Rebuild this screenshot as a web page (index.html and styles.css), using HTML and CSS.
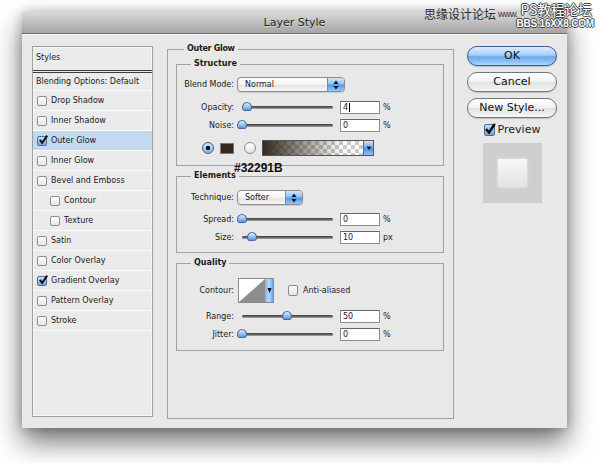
FILE: index.html
```html
<!DOCTYPE html>
<html lang="en">
<head>
<meta charset="utf-8">
<title>Layer Style</title>
<link rel="stylesheet" href="styles.css">
</head>
<body>
<div class="watermark">
  <span class="wm-cn">思缘设计论坛</span>
  <span class="wm-www">www.</span>
  <span class="wm-stack">
    <span class="wm-ps">PS教程论坛</span>
    <span class="wm-bbs">BBS.16XX8.COM</span>
  </span>
</div>

<div class="window">
  <div class="titlebar">Layer Style</div>
  <div class="content">

    <div class="styles-panel">
      <div class="sp-head">Styles</div>
      <div class="sp-row sp-blend">Blending Options: Default</div>
      <div class="sp-row"><span class="cb"></span>Drop Shadow</div>
      <div class="sp-row"><span class="cb"></span>Inner Shadow</div>
      <div class="sp-row sel"><span class="cb on"><svg viewBox="0 0 10 10" width="10" height="10"><path d="M1.8 4.8 L4.2 7.8 L9.2 0.6" fill="none" stroke="#111" stroke-width="2"/></svg></span>Outer Glow</div>
      <div class="sp-row"><span class="cb"></span>Inner Glow</div>
      <div class="sp-row"><span class="cb"></span>Bevel and Emboss</div>
      <div class="sp-row sub"><span class="cb"></span>Contour</div>
      <div class="sp-row sub"><span class="cb"></span>Texture</div>
      <div class="sp-row"><span class="cb"></span>Satin</div>
      <div class="sp-row"><span class="cb"></span>Color Overlay</div>
      <div class="sp-row"><span class="cb on"><svg viewBox="0 0 10 10" width="10" height="10"><path d="M1.8 4.8 L4.2 7.8 L9.2 0.6" fill="none" stroke="#111" stroke-width="2"/></svg></span>Gradient Overlay</div>
      <div class="sp-row"><span class="cb"></span>Pattern Overlay</div>
      <div class="sp-row"><span class="cb"></span>Stroke</div>
    </div>

    <fieldset class="main">
      <legend>Outer Glow</legend>

      <fieldset class="group g-structure">
        <legend>Structure</legend>
        <div class="row r-blend">
          <span class="lbl">Blend Mode:</span>
          <div class="select w-blend"><span class="txt">Normal</span><span class="cap"><svg viewBox="0 0 6 10" width="6" height="10"><path d="M3 0.5 L5.6 4 L0.4 4 Z M3 9.5 L5.6 6 L0.4 6 Z" fill="#0d1733"/></svg></span></div>
        </div>
        <div class="row r-opacity">
          <span class="lbl">Opacity:</span>
          <div class="slider"><div class="track"></div><div class="thumb" style="left:5px"></div></div>
          <div class="input">4<i class="caret"></i></div><span class="unit">%</span>
        </div>
        <div class="row r-noise">
          <span class="lbl">Noise:</span>
          <div class="slider"><div class="track"></div><div class="thumb" style="left:0px"></div></div>
          <div class="input">0</div><span class="unit">%</span>
        </div>
        <div class="row r-color">
          <span class="radio on"></span>
          <span class="swatch"></span>
          <span class="radio"></span>
          <span class="gradient"><span class="grad-fill"></span><span class="grad-cap"><svg viewBox="0 0 6 6" width="6" height="6"><path d="M0.5 1.5 L5.5 1.5 L3 5 Z" fill="#111"/></svg></span></span>
        </div>
      </fieldset>

      <div class="hex">#32291B</div>

      <fieldset class="group g-elements">
        <legend>Elements</legend>
        <div class="row r-tech">
          <span class="lbl">Technique:</span>
          <div class="select w-tech"><span class="txt">Softer</span><span class="cap"><svg viewBox="0 0 6 10" width="6" height="10"><path d="M3 0.5 L5.6 4 L0.4 4 Z M3 9.5 L5.6 6 L0.4 6 Z" fill="#0d1733"/></svg></span></div>
        </div>
        <div class="row r-spread">
          <span class="lbl">Spread:</span>
          <div class="slider"><div class="track"></div><div class="thumb" style="left:0px"></div></div>
          <div class="input">0</div><span class="unit">%</span>
        </div>
        <div class="row r-size">
          <span class="lbl">Size:</span>
          <div class="slider"><div class="track"></div><div class="thumb" style="left:10px"></div></div>
          <div class="input">10</div><span class="unit">px</span>
        </div>
      </fieldset>

      <fieldset class="group g-quality">
        <legend>Quality</legend>
        <div class="row r-contour">
          <span class="lbl">Contour:</span>
          <div class="contour">
            <svg class="contour-curve" viewBox="0 0 26 23" width="26" height="23" preserveAspectRatio="none"><path d="M0 23 L26 0 L26 23 Z" fill="#8e8e8e"/></svg>
            <span class="contour-cap"><svg viewBox="0 0 6 8" width="5" height="7"><path d="M0.5 1 L5.5 1 L3 7 Z" fill="#111"/></svg></span>
          </div>
          <span class="cbox"></span><span class="cbox-lbl">Anti-aliased</span>
        </div>
        <div class="row r-range">
          <span class="lbl">Range:</span>
          <div class="slider"><div class="track"></div><div class="thumb" style="left:45px"></div></div>
          <div class="input">50</div><span class="unit">%</span>
        </div>
        <div class="row r-jitter">
          <span class="lbl">Jitter:</span>
          <div class="slider"><div class="track"></div><div class="thumb" style="left:0px"></div></div>
          <div class="input">0</div><span class="unit">%</span>
        </div>
      </fieldset>
    </fieldset>

    <div class="actions">
      <div class="btn ok">OK</div>
      <div class="btn">Cancel</div>
      <div class="btn">New Style...</div>
      <div class="preview-toggle"><span class="pcb"><svg viewBox="0 0 12 12" width="12" height="12"><path d="M2 6 L5 9.5 L10.8 0.8" fill="none" stroke="#0a0a0a" stroke-width="2.4"/></svg></span><span>Preview</span></div>
      <div class="preview-box"><div class="preview-square"></div></div>
    </div>

  </div>
</div>
</body>
</html>
```

FILE: styles.css
```css
html, body {
  margin: 0;
  padding: 0;
}
body {
  width: 600px;
  height: 463px;
  overflow: hidden;
  background: #ffffff;
  font-family: "DejaVu Sans", "Liberation Sans", sans-serif;
  font-size: 8px;
  color: #1a1a1a;
  position: relative;
}

/* watermark overlay */
.watermark {
  position: absolute;
  left: 424px;
  top: 1px;
  z-index: 5;
  display: flex;
  align-items: flex-start;
  white-space: nowrap;
}
.wm-cn {
  font-family: "Noto Sans CJK SC", sans-serif;
  font-size: 12px;
  line-height: 14px;
  color: #2b2b2b;
  margin-top: 6px;
}
.wm-www {
  font-family: "Liberation Sans", sans-serif;
  font-size: 9px;
  line-height: 9px;
  color: #333;
  margin-top: 9px;
  margin-left: 2px;
  letter-spacing: -0.5px;
}
.wm-stack {
  display: flex;
  flex-direction: column;
  align-items: flex-start;
  margin-left: 3px;
}
.wm-ps {
  font-family: "Noto Sans CJK SC", sans-serif;
  font-size: 14px;
  line-height: 17px;
  color: #ffffff;
  text-shadow: 1px 0 0 #444, -1px 0 0 #444, 0 1px 0 #444, 0 -1px 0 #444;
  letter-spacing: -0.3px;
}
.wm-bbs {
  font-family: "Liberation Sans", sans-serif;
  font-weight: bold;
  font-size: 10px;
  line-height: 11px;
  color: #ffffff;
  text-shadow: 1px 0 0 #444, -1px 0 0 #444, 0 1px 0 #444, 0 -1px 0 #444;
  margin-left: -4px;
  letter-spacing: -0.2px;
}

/* window */
.window {
  margin: 12px 0 0 22px;
  width: 545px;
  background: #e8e8e8;
  box-shadow: 0 14px 26px rgba(0, 0, 0, 0.55), 0 0 10px rgba(0, 0, 0, 0.22);
}
.titlebar {
  height: 22px;
  box-sizing: border-box;
  border-bottom: 1px solid #6a6a6a;
  background: linear-gradient(#dadada, #b9b9b9 60%, #a5a5a5);
  text-align: center;
  font-size: 11px;
  line-height: 21px;
  color: #1e1e1e;
  text-shadow: 0 1px 0 rgba(255, 255, 255, 0.45);
}
.content {
  display: flex;
  align-items: flex-start;
  height: 394px;
  box-sizing: border-box;
  padding: 11px 10px 0 10px;
  border-top: 1px solid #f6f6f6;
}

/* styles list */
.styles-panel {
  width: 121px;
  height: 371px;
  box-sizing: border-box;
  border: 1px solid #9e9e9e;
  background: #ebebeb;
  box-shadow: inset 0 0 0 1px #f7f7f7;
  flex: none;
}
.sp-head {
  height: 23px;
  line-height: 22px;
  padding-left: 3px;
  border-bottom: 3px double #3c3c3c;
}
.sp-row {
  height: 19px;
  display: flex;
  align-items: center;
  gap: 4px;
  padding-left: 4px;
  border-bottom: 1px solid #fbfbfb;
  white-space: nowrap;
}
.sp-blend {
  height: 17px;
  padding-left: 3px;
}
.sp-row.sub {
  padding-left: 17px;
}
.sp-row.sel {
  background: #c4d8ef;
}
.cb {
  width: 10px;
  height: 10px;
  box-sizing: border-box;
  border: 1px solid #8e8e8e;
  border-radius: 2px;
  background: linear-gradient(#ffffff, #e6e6e6);
  flex: none;
  display: flex;
  align-items: center;
  justify-content: center;
  overflow: visible;
}
.cb.on {
  background: linear-gradient(#c9e0f8, #76a9e2);
  border-color: #4d6f98;
}
.cb svg {
  flex: none;
  margin-top: -2px;
  margin-right: -2px;
}

/* main fieldset */
fieldset {
  margin: 0;
  min-inline-size: 0;
}
legend {
  font-weight: bold;
  font-size: 8px;
  line-height: 10px;
  padding: 0 3px;
  color: #1a1a1a;
}
.main {
  margin-top: -2px;
  margin-left: 14px;
  width: 287px;
  height: 375px;
  box-sizing: border-box;
  border: 1px solid #a2a2a2;
  padding: 5px 9px 0 8px;
  flex: none;
}
.main > legend {
  margin-left: 8px;
  letter-spacing: -0.3px;
}
.group {
  width: 268px;
  box-sizing: border-box;
  border: 1px solid #a2a2a2;
  padding: 0 0 9px 0;
}
.group > legend {
  margin-left: 14px;
}
.g-elements {
  padding-bottom: 8px;
}
.g-quality {
  margin-top: 5px;
}

.row {
  display: flex;
  align-items: center;
  height: 14px;
  white-space: nowrap;
}
.lbl {
  width: 57px;
  flex: none;
  text-align: right;
  margin-right: 3px;
}
.r-blend { margin-top: 8px; height: 15px; }
.r-opacity { margin-top: 8px; }
.r-noise { margin-top: 4px; }
.r-color { margin-top: 8px; height: 16px; padding-left: 25px; }
.r-tech { margin-top: 9px; height: 15px; }
.r-spread { margin-top: 7px; }
.r-size { margin-top: 4px; }
.r-contour { margin-top: 10px; height: 25px; }
.r-range { margin-top: 6px; }
.r-jitter { margin-top: 4px; }

/* popup select */
.select {
  display: flex;
  align-items: center;
  height: 15px;
  box-sizing: border-box;
  border: 1px solid #8a8a8a;
  border-radius: 4px;
  background: linear-gradient(#ffffff, #f3f3f3 50%, #e3e3e3 52%, #f6f6f6);
  overflow: hidden;
  box-shadow: 0 1px 1px rgba(0, 0, 0, 0.12);
}
.w-blend { width: 108px; }
.w-tech { width: 66px; }
.select .txt {
  flex: 1;
  padding-left: 7px;
}
.select .cap {
  width: 16px;
  align-self: stretch;
  display: flex;
  align-items: center;
  justify-content: center;
  border-left: 1px solid #6f8db2;
  background: linear-gradient(#d3e6fa, #8fc0f2 48%, #4f97e6 52%, #93c7f6);
}

/* sliders */
.slider {
  position: relative;
  width: 96px;
  height: 14px;
  padding-left: 5px;
  box-sizing: border-box;
  flex: none;
}
.track {
  margin-top: 6px;
  height: 3px;
  border-radius: 2px;
  background: linear-gradient(#3b3b3b, #777 70%, #b5b5b5);
}
.thumb {
  position: absolute;
  top: 2px;
  width: 10px;
  height: 9px;
  box-sizing: border-box;
  border: 1px solid #46699a;
  border-radius: 50% 50% 35% 35% / 60% 60% 40% 40%;
  background: linear-gradient(#e2efff, #95c0ef 55%, #5d97dc);
}
.input {
  margin-left: 7px;
  width: 40px;
  height: 13px;
  box-sizing: border-box;
  border: 1px solid #8c8c8c;
  border-top-color: #666;
  background: #ffffff;
  line-height: 11px;
  padding-left: 2px;
  display: flex;
  align-items: center;
}
.caret {
  display: inline-block;
  width: 1px;
  height: 9px;
  background: #000;
  margin-left: 1px;
}
.unit {
  margin-left: 3px;
}

/* color row */
.radio {
  width: 12px;
  height: 12px;
  box-sizing: border-box;
  border-radius: 50%;
  border: 1px solid #8a8a8a;
  background: linear-gradient(#ffffff, #e4e4e4);
  flex: none;
}
.radio.on {
  border-color: #3f5f89;
  background: radial-gradient(circle, #111 0 2px, transparent 2.5px), linear-gradient(#d4e6fa, #7fb0e8);
}
.swatch {
  margin-left: 6px;
  width: 14px;
  height: 11px;
  box-sizing: border-box;
  border: 1px solid #777;
  background: #32291B;
  flex: none;
}
.r-color .radio:not(.on) {
  margin-left: 10px;
}
.gradient {
  margin-left: 6px;
  width: 112px;
  height: 16px;
  box-sizing: border-box;
  border: 1px solid #555;
  display: flex;
  flex: none;
}
.grad-fill {
  flex: 1;
  background:
    linear-gradient(90deg, #32291B, rgba(50, 41, 27, 0.55) 35%, rgba(50, 41, 27, 0) 80%),
    repeating-conic-gradient(#c9c9c9 0 25%, #ffffff 0 50%) 0 0 / 8px 8px;
}
.grad-cap {
  width: 9px;
  display: flex;
  align-items: center;
  justify-content: center;
  border-left: 1px solid #4b6d98;
  background: linear-gradient(#cfe4fb, #6ea9ec 50%, #4a90e2 52%, #8fc3f5);
}

/* annotation */
.hex {
  margin: -4px 0 -3px 58px;
  height: 12px;
  font-family: "Liberation Sans", Arial, sans-serif;
  font-weight: bold;
  font-size: 12px;
  line-height: 12px;
  color: #111;
}

/* contour */
.contour {
  margin-left: 1px;
  width: 36px;
  height: 25px;
  box-sizing: border-box;
  border: 1px solid #8a8a8a;
  background: #ffffff;
  display: flex;
  flex: none;
}
.contour-curve {
  display: block;
  flex: none;
}
.contour-cap {
  flex: 1;
  display: flex;
  align-items: center;
  justify-content: center;
  background: linear-gradient(90deg, #7fb4ee, #b9d8f8 50%, #6aa6ea);
}
.cbox {
  margin-left: 14px;
  width: 10px;
  height: 11px;
  box-sizing: border-box;
  border: 1px solid #8c8c8c;
  border-radius: 2px;
  background: linear-gradient(#ffffff, #e4e4e4);
  flex: none;
}
.cbox-lbl {
  margin-left: 5px;
}

/* right column */
.actions {
  margin-left: 13px;
  width: 90px;
  flex: none;
  display: flex;
  flex-direction: column;
  align-items: center;
}
.btn {
  width: 90px;
  height: 20px;
  box-sizing: border-box;
  border: 1px solid #777;
  border-radius: 10px;
  background: linear-gradient(#ffffff, #f2f2f2 48%, #e1e1e1 52%, #f7f7f7);
  font-size: 11px;
  line-height: 18px;
  text-align: center;
  color: #111;
  box-shadow: 0 1px 1px rgba(0, 0, 0, 0.18);
  margin-bottom: 6px;
}
.btn.ok {
  border-color: #3d5f8e;
  background: linear-gradient(#dcecfd, #a5cdf5 45%, #6ba9ee 55%, #a9d3fa);
}
.preview-toggle {
  display: flex;
  align-items: center;
  gap: 3px;
  height: 12px;
  font-size: 11px;
  line-height: 12px;
  margin-bottom: 7px;
}
.pcb {
  width: 11px;
  height: 12px;
  box-sizing: border-box;
  border: 1px solid #4c6f98;
  border-radius: 2px;
  background: linear-gradient(#c9e0f8, #6fa3df);
  display: flex;
  align-items: center;
  justify-content: center;
  overflow: visible;
}
.pcb svg {
  flex: none;
  margin-top: -2px;
  margin-right: -2px;
}
.preview-box {
  width: 59px;
  height: 60px;
  background: #cfcfcf;
  display: flex;
  align-items: center;
  justify-content: center;
}
.preview-square {
  width: 29px;
  height: 28px;
  background: linear-gradient(#f7f7f7, #e2e2e2);
  box-shadow: 0 0 3px rgba(255, 255, 255, 0.6);
}
```
